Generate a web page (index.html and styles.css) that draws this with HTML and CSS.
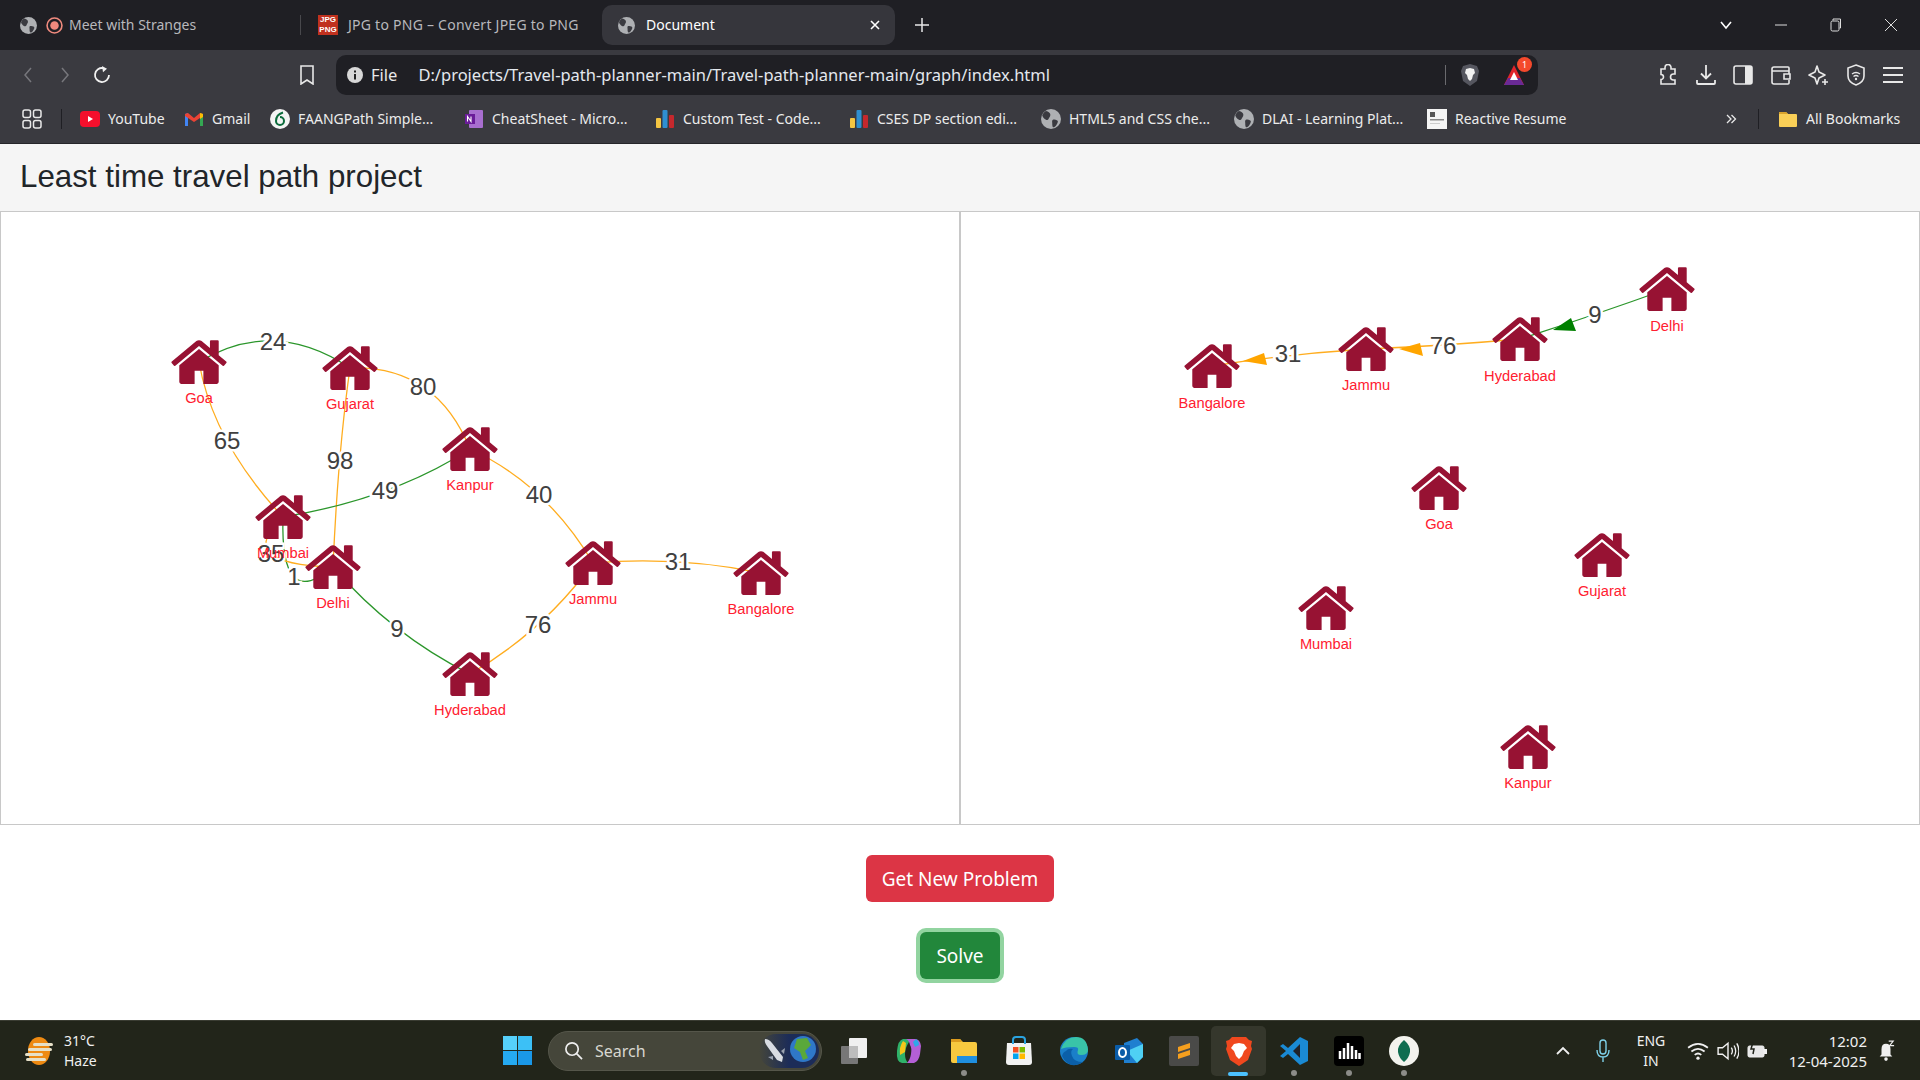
FILE: index.html
```html
<!DOCTYPE html>
<html lang="en">

<head>
  <meta charset="UTF-8">
  <title>Document</title>
  <link rel="stylesheet" href="styles.css">
</head>

<body>
  <svg class="defs" aria-hidden="true">
    <symbol id="house" viewBox="97 250 1598 1286">
      <path d="M1472 992v480q0 26-19 45t-45 19h-384v-384h-256v384h-384q-26 0-45-19t-19-45v-480q0-1 .5-3t.5-3l575-474 575 474q1 2 1 6zm223-69l-62 74q-8 9-21 11h-3q-13 0-21-7l-692-577-692 577q-12 8-24 7-13-2-21-11l-62-74q-8-10-7-23.5t11-20.5l719-599q32-26 76-26t76 26l244 204v-195q0-14 9-23t23-9h192q14 0 23 9t9 23v408l219 182q10 8 11 21.5t-7 23.5z" />
    </symbol>
    <symbol id="globe" viewBox="0 0 16 16">
      <circle cx="8" cy="8" r="8" fill="#aeb0b3" />
      <path d="M4 1.500c2 .5 3.500 1.500 3.500 3S6.500 6.500 6 8 3.500 8.500 2.500 7.500 1 5.500 1 5s1.500-3 3-3.500zM9.500 8.500c2-.5 4 .5 4 1.500s-1.500 4-3 4.500-1.500-2-1.500-3-.5-2.500.5-3z" fill="#3a3a40" />
    </symbol>
    <symbol id="bars" viewBox="0 0 20 20">
      <rect x="1" y="9" width="5" height="10" rx="1" fill="#f4c542" />
      <rect x="7.500" y="1" width="5" height="18" rx="1" fill="#2f8fd0" />
      <rect x="14" y="6" width="5" height="13" rx="1" fill="#c5282d" />
    </symbol>
    <linearGradient id="art-fade" x1="0" x2="1" y1="0" y2="0">
      <stop offset="0" stop-color="#1c2c58" stop-opacity="0" />
      <stop offset=".5" stop-color="#1c2c58" />
    </linearGradient>
  </svg>

  <header class="browser">
    <div class="tabs">
      <div class="tab tab-first">
        <svg class="ico16"><use href="#globe" /></svg>
        <svg class="ico16" viewBox="0 0 16 16"><circle cx="8" cy="8" r="7" fill="none" stroke="#f08a7e" stroke-width="1.500" /><circle cx="8" cy="8" r="4" fill="#f08a7e" /></svg>
        <span class="tab-title">Meet with Stranges</span>
      </div>
      <div class="tab-sep"></div>
      <div class="tab tab-second">
        <span class="jpg-icon">JPG<br>PNG</span>
        <span class="tab-title">JPG to PNG – Convert JPEG to PNG</span>
      </div>
      <div class="tab tab-active">
        <svg class="ico16"><use href="#globe" /></svg>
        <span class="tab-title">Document</span>
        <svg class="tab-close" viewBox="0 0 10 10"><path d="M1 1l8 8M9 1l-8 8" stroke="#fff" stroke-width="1.600" /></svg>
      </div>
      <svg class="new-tab" viewBox="0 0 14 14"><path d="M7 0v14M0 7h14" stroke="#e8e8e8" stroke-width="1.500" /></svg>
      <div class="win-btns">
        <svg class="win-ico" viewBox="0 0 14 14"><path d="M2 4l5 6 5-6" fill="none" stroke="#fff" stroke-width="1.600" /></svg>
        <svg class="win-ico" viewBox="0 0 14 14"><path d="M1 7h12" stroke="#ddd" stroke-width="1" /></svg>
        <svg class="win-ico" viewBox="0 0 14 14"><rect x="2" y="3" width="8" height="10" rx="1.500" fill="none" stroke="#ddd" /><path d="M4 2.500V1h7.500v9H10.500" fill="none" stroke="#ddd" /></svg>
        <svg class="win-ico" viewBox="0 0 14 14"><path d="M1 1l12 12M13 1L1 13" stroke="#ddd" stroke-width="1" /></svg>
      </div>
    </div>

    <div class="toolbar">
      <div class="nav-btns">
        <svg class="nav-ico" viewBox="0 0 20 20"><path d="M13 3l-6 7 6 7" fill="none" stroke="#77777c" stroke-width="1.500" /></svg>
        <svg class="nav-ico" viewBox="0 0 20 20"><path d="M7 3l6 7-6 7" fill="none" stroke="#77777c" stroke-width="1.500" /></svg>
        <svg class="nav-ico" viewBox="0 0 20 20"><path d="M11.500 3.200A7 7 0 1 0 17 10" fill="none" stroke="#f0f0f0" stroke-width="1.800" /><path d="M10 1l5 2.800-4 3.400z" fill="#f0f0f0" /></svg>
      </div>
      <svg class="bookmark-ico" viewBox="0 0 16 20"><path d="M2 1h12v18l-6-4-6 4z" fill="none" stroke="#e8e8e8" stroke-width="1.600" /></svg>
      <div class="address">
        <svg class="info-ico" viewBox="0 0 16 16"><circle cx="8" cy="8" r="8" fill="#d8d8d8" /><path d="M7 7h2v5.500H7zM7 3.500h2v2H7z" fill="#222" /></svg>
        <span class="addr-file">File</span>
        <span class="addr-url">D:/projects/Travel-path-planner-main/Travel-path-planner-main/graph/index.html</span>
        <div class="addr-sep"></div>
        <svg class="lion-ico" viewBox="0 0 20 24"><path d="M10 1l7 2 2 5-2 10-7 5-7-5L1 8l2-5z" fill="#55565f" /><path d="M10 5l4 1 1 4-2 2-1 4-2 2-2-2-1-4-2-2 1-4z" fill="#f2f2f2" /></svg>
        <div class="rewards">
          <svg viewBox="0 0 24 24" class="rewards-ico"><path d="M12 2l10 20H2z" fill="#e0242c" /><path d="M2 22l4-7h12l4 7z" fill="#6a2a96" /><path d="M12 9l4 8H8z" fill="#fff" /></svg>
          <span class="badge">1</span>
        </div>
      </div>
      <div class="tool-icons">
        <svg class="tool-ico" viewBox="0 0 22 22"><path d="M8 3.500a3 3 0 0 1 6 0V5h4v5h-1.500a3 3 0 0 0 0 6H18v4H4v-4.500a2.500 2.500 0 0 0 0-5V5h4z" fill="none" stroke="#e8e8e8" stroke-width="1.600" /></svg>
        <svg class="tool-ico" viewBox="0 0 22 22"><path d="M11 1v13M6 9.500l5 5 5-5M2 16v3q0 1 1 1h16q1 0 1-1v-3" fill="none" stroke="#e8e8e8" stroke-width="1.800" /></svg>
        <svg class="tool-ico" viewBox="0 0 22 22"><rect x="2" y="2" width="18" height="18" rx="2" fill="none" stroke="#e8e8e8" stroke-width="1.600" /><rect x="13" y="2" width="7" height="18" fill="#e8e8e8" /></svg>
        <svg class="tool-ico" viewBox="0 0 22 22"><path d="M19 7V4q0-1-1-1H4q-2 0-2 2v13q0 2 2 2h14q1 0 1-1v-3M2 6q0 1 2 1h15v3M20 10h-6v5h6z" fill="none" stroke="#e8e8e8" stroke-width="1.600" /></svg>
        <svg class="tool-ico" viewBox="0 0 22 22"><path d="M10 2l2 6 6 3-6 3-2 6-2-6-6-3 6-3z" fill="none" stroke="#e8e8e8" stroke-width="1.600" stroke-linejoin="round" /><path d="M18 15v6M15 18h6" stroke="#e8e8e8" stroke-width="1.600" /></svg>
        <svg class="tool-ico" viewBox="0 0 22 22"><path d="M11 1l8 3v8q0 6-8 9-8-3-8-9V4z" fill="none" stroke="#e8e8e8" stroke-width="1.600" /><path d="M7 10q4-3 8 0M8.500 12.500q2.500-2 5 0" fill="none" stroke="#e8e8e8" stroke-width="1.300" /><circle cx="11" cy="15" r="1.200" fill="#e8e8e8" /></svg>
        <svg class="tool-ico" viewBox="0 0 22 22"><path d="M1 4h20M1 11h20M1 18h20" stroke="#e8e8e8" stroke-width="1.800" /></svg>
      </div>
    </div>

    <div class="bookmarks">
      <svg class="apps-ico" viewBox="0 0 20 20"><g fill="none" stroke="#e8e8e8" stroke-width="1.500"><rect x="1" y="1" width="7.500" height="7.500" rx="2" /><rect x="11.500" y="1" width="7.500" height="7.500" rx="2" /><rect x="1" y="11.500" width="7.500" height="7.500" rx="2" /><rect x="11.500" y="11.500" width="7.500" height="7.500" rx="2" /></g></svg>
      <div class="bm-sep"></div>
      <a class="bm bm-yt"><svg class="ico20" viewBox="0 0 20 20"><rect y="2" width="20" height="16" rx="4" fill="#f40f2c" /><path d="M8 7l5 3-5 3z" fill="#fff" /></svg>YouTube</a>
      <a class="bm bm-gmail"><svg class="ico20" viewBox="0 0 20 20"><path d="M1 5l3-1v13H1z" fill="#4285f4" /><path d="M16 4l3 1v12h-3z" fill="#34a853" /><path d="M1 5l3-1 6 5 6-5 3 1v2l-9 6-9-6z" fill="#ea4335" /><path d="M16 4l3 1v3l-3 2z" fill="#fbbc04" /></svg>Gmail</a>
      <a class="bm bm-faang"><svg class="ico20" viewBox="0 0 20 20"><circle cx="10" cy="10" r="10" fill="#f4f4f4" /><path d="M13 3.500C8 5 6 8.500 6 12a4 4 0 1 0 4-4" fill="none" stroke="#0c6b3c" stroke-width="2" /></svg>FAANGPath Simple...</a>
      <a class="bm bm-one"><svg class="ico20" viewBox="0 0 20 20"><rect x="5" y="1" width="14" height="18" rx="1" fill="#a86ed0" /><rect x="1" y="5" width="10" height="10" fill="#6a1b9a" /><path d="M3.500 12.500v-5l3.500 5v-5" fill="none" stroke="#fff" stroke-width="1.100" /></svg>CheatSheet - Micro...</a>
      <a class="bm bm-custom"><svg class="ico20"><use href="#bars" /></svg>Custom Test - Code...</a>
      <a class="bm bm-cses"><svg class="ico20"><use href="#bars" /></svg>CSES DP section edi...</a>
      <a class="bm bm-html"><svg class="ico20"><use href="#globe" /></svg>HTML5 and CSS che...</a>
      <a class="bm bm-dlai"><svg class="ico20"><use href="#globe" /></svg>DLAI - Learning Plat...</a>
      <a class="bm bm-resume"><svg class="ico20" viewBox="0 0 20 20"><rect width="20" height="20" fill="#f4f4f4" /><rect x="3" y="3" width="5" height="5" fill="#555" /><rect x="3" y="10" width="14" height="1.500" fill="#888" /><rect x="3" y="14" width="10" height="1" fill="#ccc" /></svg>Reactive Resume</a>
      <svg class="bm-more" viewBox="0 0 12 12"><path d="M2 2l4 4-4 4M6.500 2l4 4-4 4" fill="none" stroke="#e8e8e8" stroke-width="1.300" /></svg>
      <div class="bm-sep bm-sep-right"></div>
      <a class="bm bm-all"><svg class="ico20" viewBox="0 0 20 20"><path d="M1 4q0-1 1-1h6l2 2h8q1 0 1 1v11q0 1-1 1H2q-1 0-1-1z" fill="#f9cf57" /><path d="M1 4q0-1 1-1h6l2 2H1z" fill="#d9a32c" /></svg>All Bookmarks</a>
    </div>
  </header>

  <h1 class="title-bar">Least time travel path project</h1>

  <main class="panels">
    <div class="panel">
      <svg class="graph" viewBox="1 212 958 612">
        <path class="edge green" d="M199 362Q274 317 350 368" />
        <path class="edge orange" d="M350 368Q436 365 470 449" />
        <path class="edge orange" d="M199 362Q213 442 283 517" />
        <path class="edge orange" d="M350 368Q338 452 333 567" />
        <path class="edge green" d="M283 517Q393 499 470 449" />
        <path class="edge orange" d="M470 449Q546 484 593 563" />
        <path class="edge orange" d="M593 563Q679 556 761 573" />
        <path class="edge orange" d="M593 563Q544 631 470 674" />
        <path class="edge green" d="M333 567Q392 635 470 674" />
        <path class="edge green" d="M283 517Q280 612 333 567" />
        <path class="edge orange" d="M283 517Q232 564 333 567" />

        <text class="edge-label" x="273" y="350">24</text>
        <text class="edge-label" x="423" y="395">80</text>
        <text class="edge-label" x="227" y="449">65</text>
        <text class="edge-label" x="340" y="469">98</text>
        <text class="edge-label" x="385" y="499">49</text>
        <text class="edge-label" x="539" y="503">40</text>
        <text class="edge-label" x="678" y="570">31</text>
        <text class="edge-label" x="538" y="633">76</text>
        <text class="edge-label" x="397" y="637">9</text>
        <text class="edge-label" x="294" y="585">1</text>
        <text class="edge-label" x="271" y="562">35</text>

        <g class="node" transform="translate(199 362)"><use href="#house" x="-28" y="-22" width="56" height="44" /><text y="41">Goa</text></g>
        <g class="node" transform="translate(350 368)"><use href="#house" x="-28" y="-22" width="56" height="44" /><text y="41">Gujarat</text></g>
        <g class="node" transform="translate(470 449)"><use href="#house" x="-28" y="-22" width="56" height="44" /><text y="41">Kanpur</text></g>
        <g class="node" transform="translate(283 517)"><use href="#house" x="-28" y="-22" width="56" height="44" /><text y="41">Mumbai</text></g>
        <g class="node" transform="translate(333 567)"><use href="#house" x="-28" y="-22" width="56" height="44" /><text y="41">Delhi</text></g>
        <g class="node" transform="translate(593 563)"><use href="#house" x="-28" y="-22" width="56" height="44" /><text y="41">Jammu</text></g>
        <g class="node" transform="translate(761 573)"><use href="#house" x="-28" y="-22" width="56" height="44" /><text y="41">Bangalore</text></g>
        <g class="node" transform="translate(470 674)"><use href="#house" x="-28" y="-22" width="56" height="44" /><text y="41">Hyderabad</text></g>
      </svg>
    </div>
    <div class="panel">
      <svg class="graph" viewBox="961 212 958 612">
        <path class="edge green" d="M1667 289Q1595 315 1520 339" />
        <path class="edge orange" d="M1520 339Q1443 346 1366 349" />
        <path class="edge orange" d="M1366 349Q1288 354 1212 366" />
        <path class="arrow-green" d="M1553 330L1571 318 1576 331z" />
        <path class="arrow-orange" d="M1399 349L1420 343 1423 356z" />
        <path class="arrow-orange" d="M1243 361L1264 353 1267 365z" />

        <text class="edge-label" x="1595" y="323">9</text>
        <text class="edge-label" x="1443" y="354">76</text>
        <text class="edge-label" x="1288" y="362">31</text>

        <g class="node" transform="translate(1667 289)"><use href="#house" x="-28" y="-22" width="56" height="44" /><text y="42">Delhi</text></g>
        <g class="node" transform="translate(1520 339)"><use href="#house" x="-28" y="-22" width="56" height="44" /><text y="42">Hyderabad</text></g>
        <g class="node" transform="translate(1366 349)"><use href="#house" x="-28" y="-22" width="56" height="44" /><text y="41">Jammu</text></g>
        <g class="node" transform="translate(1212 366)"><use href="#house" x="-28" y="-22" width="56" height="44" /><text y="42">Bangalore</text></g>
        <g class="node" transform="translate(1439 488)"><use href="#house" x="-28" y="-22" width="56" height="44" /><text y="41">Goa</text></g>
        <g class="node" transform="translate(1602 555)"><use href="#house" x="-28" y="-22" width="56" height="44" /><text y="41">Gujarat</text></g>
        <g class="node" transform="translate(1326 608)"><use href="#house" x="-28" y="-22" width="56" height="44" /><text y="41">Mumbai</text></g>
        <g class="node" transform="translate(1528 747)"><use href="#house" x="-28" y="-22" width="56" height="44" /><text y="41">Kanpur</text></g>
      </svg>
    </div>
  </main>

  <section class="actions">
    <button class="btn btn-red">Get New Problem</button>
    <button class="btn btn-green">Solve</button>
  </section>

  <footer class="taskbar">
    <div class="weather">
      <svg class="weather-ico" viewBox="0 0 30 30"><ellipse cx="15" cy="15" rx="11" ry="14" fill="#ee8a12" /><g fill="#e6e0c8"><rect x="9" y="7" width="20" height="3" rx="1.500" /><rect x="4" y="12" width="24" height="3" rx="1.500" /><rect x="1" y="17" width="18" height="3" rx="1.500" /><rect x="2" y="22" width="20" height="3" rx="1.500" /></g></svg>
      <div class="weather-text"><span>31°C</span><span>Haze</span></div>
    </div>
    <svg class="win-logo" viewBox="0 0 30 30"><g fill="#2bb5f0"><rect width="14.500" height="14.500" fill="#56d0fa" /><rect x="15.500" width="14.500" height="14.500" fill="#3cc0f6" /><rect y="15.500" width="14.500" height="14.500" fill="#25aaf2" /><rect x="15.500" y="15.500" width="14.500" height="14.500" fill="#1a98e8" /></g></svg>
    <div class="search">
      <svg class="search-ico" viewBox="0 0 20 20"><circle cx="8.500" cy="8.500" r="6.500" fill="none" stroke="#eee" stroke-width="1.800" /><path d="M13 13l6 6" stroke="#eee" stroke-width="1.800" /></svg>
      <span class="search-text">Search</span>
      <svg class="search-art" viewBox="0 0 60 34">
        <rect width="60" height="34" rx="17" fill="url(#art-fade)" />
        <path d="M6 5q4 0 7 4l11 14-1 5-5-2L8 12q-3-4-2-7z" fill="#d8dce2" />
        <path d="M14 22l-5 1 5 3zM22 17l4-3-1 6z" fill="#9aa2b0" />
        <circle cx="44" cy="15" r="13" fill="#2f78c8" />
        <path d="M38 5l10-1 4 7-6 6 3 7-5 2-3-8-6-4z" fill="#5aa83a" />
      </svg>
    </div>
    <div class="task-icons">
      <div class="task"><svg class="task-ico" viewBox="0 0 30 30"><rect x="10" y="2" width="18" height="20" rx="1" fill="#f0f0f0" /><rect x="2" y="10" width="17" height="18" rx="1" fill="#777" /><rect x="10" y="10" width="9" height="12" fill="#bdbdbd" /></svg></div>
      <div class="task"><svg class="task-ico" viewBox="0 0 30 30"><path d="M9 3q-5 1-6 12t5 12h6q-3-3-3-9t4-12q1-3 4-3z" fill="#2fb26a" /><path d="M12 3h9q5 0 6 7l-1 8q-1 7-6 9h-7q3-3 4-9t-1-9q-1-5-4-6z" fill="#b45fd6" /><path d="M9 5q-4 6-3 14l5-3 1-9z" fill="#f5c71a" /><path d="M22 3q3 2 3 6l-4 2-2-5z" fill="#2fa8e8" /></svg></div>
      <div class="task"><svg class="task-ico" viewBox="0 0 30 30"><path d="M2 5q0-2 2-2h7l3 3h12q2 0 2 2v17q0 2-2 2H4q-2 0-2-2z" fill="#f8c93f" /><path d="M2 3h9l2 3H2z" fill="#dd9c1e" /><rect x="8" y="20" width="20" height="7" fill="#1f8fe0" /></svg><i class="dot"></i></div>
      <div class="task"><svg class="task-ico" viewBox="0 0 30 30"><path d="M3 7h24l1 19q0 3-3 3H5q-3 0-3-3z" fill="#f2f2f2" /><path d="M9 8V4q0-3 3-3h6q3 0 3 3v4" fill="none" stroke="#2aa3e0" stroke-width="2" /><rect x="9" y="11" width="5.500" height="5.500" fill="#f25022" /><rect x="15.500" y="11" width="5.500" height="5.500" fill="#7fba00" /><rect x="9" y="17.500" width="5.500" height="5.500" fill="#00a4ef" /><rect x="15.500" y="17.500" width="5.500" height="5.500" fill="#ffb900" /></svg></div>
      <div class="task"><svg class="task-ico" viewBox="0 0 30 30"><circle cx="15" cy="15" r="14" fill="#1a7fc9" /><path d="M2 13Q6 1 17 1q11 0 12 13 0 5-7 5-5 0-3-5 1-3-4-3-9 0-13 2z" fill="#39c4a8" /><path d="M7 15q2-3 7-2-3 2-1 7 2 6 11 6-5 4-11 3T3 20q1-4 4-5z" fill="#0b5fa8" /></svg></div>
      <div class="task"><svg class="task-ico" viewBox="0 0 30 30"><path d="M10 7l13-5 6 6v13l-6 6H10z" fill="#1f7fd0" /><path d="M13 15l16-7v13l-6 6z" fill="#4fd0f4" /><rect x="1" y="9" width="15" height="15" rx="1" fill="#0a5ca8" /><ellipse cx="8.500" cy="16.500" rx="3.500" ry="4.500" fill="none" stroke="#fff" stroke-width="2" /></svg></div>
      <div class="task"><svg class="task-ico" viewBox="0 0 30 30"><rect width="30" height="30" rx="2" fill="#4a4a48" /><path d="M21 7L9 11v5l12-4zM21 14L9 18v5l12-4z" fill="#f59f1e" /></svg></div>
      <div class="task task-active"><svg class="task-ico" viewBox="0 0 30 30"><path d="M8 1h14l3 3 3 1-1 5 1 3-4 11-9 6-9-6L2 13l1-3-1-5 3-1z" fill="#f0481e" /><path d="M15 7l5 1 3 4-3 3-2 5-3 3-3-3-2-5-3-3 3-4z" fill="#fff" /></svg><i class="active-line"></i></div>
      <div class="task"><svg class="task-ico" viewBox="0 0 30 30"><path d="M21 1l8 4v20l-8 4L9 18l-5 4-3-2 6-5-6-5 3-2 5 4z" fill="#1a8ad4" /><path d="M21 8l-7 7 7 7z" fill="#20232a" /></svg><i class="dot"></i></div>
      <div class="task"><svg class="task-ico" viewBox="0 0 30 30"><rect width="30" height="30" rx="4" fill="#000" /><path d="M6 15v8M10 12v11M14 7v16M18 10v13M22 14v9M25.500 17v6" stroke="#fff" stroke-width="2.500" /></svg><i class="dot"></i></div>
      <div class="task"><svg class="task-ico" viewBox="0 0 30 30"><circle cx="15" cy="15" r="15" fill="#f3f3ee" /><path d="M15 4q7 6 6 12-1 6-6 10-5-4-6-10-1-6 6-12z" fill="#0f6d50" /></svg><i class="dot"></i></div>
    </div>
    <div class="tray">
      <svg class="tray-ico" viewBox="0 0 16 16"><path d="M2 11l6-6 6 6" fill="none" stroke="#f0f0f0" stroke-width="1.800" /></svg>
      <svg class="tray-ico tray-mic" viewBox="0 0 16 24"><rect x="5" y="1" width="6" height="14" rx="3" fill="none" stroke="#7ed0e8" stroke-width="1.400" /><path d="M2 11q0 7 6 7t6-7M8 18v5" fill="none" stroke="#7ed0e8" stroke-width="1.400" /></svg>
      <div class="lang"><span>ENG</span><span>IN</span></div>
      <svg class="tray-ico tray-wifi" viewBox="0 0 20 20"><path d="M1 7q9-7 18 0M4 10.500q6-5 12 0M7 13.500q3-2.500 6 0" fill="none" stroke="#f0f0f0" stroke-width="1.600" /><circle cx="10" cy="16.500" r="1.500" fill="#f0f0f0" /></svg>
      <svg class="tray-ico tray-vol" viewBox="0 0 20 20"><path d="M1 7h4l5-4v14l-5-4H1z" fill="none" stroke="#f0f0f0" stroke-width="1.300" /><path d="M13 7q2 3 0 6M15.500 5q3 5 0 10M18 3q4 7 0 14" fill="none" stroke="#f0f0f0" stroke-width="1.200" /></svg>
      <svg class="tray-ico tray-bat" viewBox="0 0 22 20"><rect x="2" y="5" width="16" height="11" rx="1.500" fill="#e8e8e8" stroke="#f0f0f0" /><rect x="18" y="8" width="3" height="5" fill="#f0f0f0" /><path d="M7 1l-2 7h3l-1 5" fill="none" stroke="#20231a" stroke-width="1.500" /></svg>
      <div class="clock"><span>12:02</span><span>12-04-2025</span></div>
      <svg class="tray-ico tray-bell" viewBox="0 0 20 24"><path d="M10 4q5 0 5 6v6l2 2H3l2-2v-6q0-6 5-6z" fill="#f0f0f0" /><circle cx="10" cy="21" r="2" fill="#f0f0f0" /><path d="M13 1h5l-4 5h5" fill="none" stroke="#f0f0f0" stroke-width="1.300" /></svg>
    </div>
  </footer>
</body>

</html>
```

FILE: styles.css
```css
* {
  box-sizing: border-box;
}

body {
  margin: 0;
  width: 1920px;
  height: 1080px;
  overflow: hidden;
  display: flex;
  flex-direction: column;
  background: #fff;
  font-family: "Noto Sans", sans-serif;
}

.defs {
  position: absolute;
  width: 0;
  height: 0;
}

/* browser frame */
.browser {
  height: 144px;
  flex: none;
  color: #e8e8e8;
  font-size: 14px;
  border-bottom: 1px solid #26262a;
}

.tabs {
  height: 50px;
  display: flex;
  align-items: center;
  background: #1f1f24;
}

.tab {
  display: flex;
  align-items: center;
}

.tab-title {
  padding-bottom: 2px;
}

.tab-first {
  width: 300px;
  padding-left: 20px;
  gap: 9px;
  color: #b8b8bc;
}

.tab-first .tab-title {
  margin-left: -3px;
}

.tab-sep {
  width: 1px;
  height: 20px;
  background: #48484c;
}

.tab-second {
  width: 301px;
  padding-left: 17px;
  gap: 10px;
  color: #b8b8bc;
  letter-spacing: .25px;
}

.jpg-icon {
  width: 20px;
  height: 20px;
  background: #c0311e;
  color: #fff;
  font: bold 8px/10px "Liberation Sans", sans-serif;
  letter-spacing: 0;
  text-align: center;
}

.tab-active {
  width: 293px;
  height: 40px;
  padding: 0 15px 0 16px;
  gap: 11px;
  border-radius: 10px;
  background: #36363c;
  color: #fff;
}

.tab-close {
  width: 10px;
  height: 10px;
  margin-left: auto;
}

.ico16 {
  width: 17px;
  height: 17px;
  flex: none;
}

.new-tab {
  width: 14px;
  height: 14px;
  margin-left: 20px;
}

.win-btns {
  display: flex;
  margin-left: auto;
  padding-right: 22px;
  gap: 41px;
}

.win-ico {
  width: 14px;
  height: 14px;
}

.toolbar {
  height: 50px;
  display: flex;
  align-items: center;
  background: #3a3a40;
}

.nav-btns {
  display: flex;
  gap: 17px;
  padding-left: 18px;
}

.nav-ico {
  width: 20px;
  height: 20px;
}

.bookmark-ico {
  width: 16px;
  height: 20px;
  margin-left: 187px;
}

.address {
  width: 1202px;
  height: 40px;
  margin-left: 21px;
  padding: 0 4px 0 11px;
  display: flex;
  align-items: center;
  border-radius: 10px;
  background: #1f1f24;
  font-size: 16.500px;
}

.info-ico {
  width: 16px;
  height: 16px;
}

.addr-file {
  margin-left: 8px;
  padding-bottom: 2px;
  color: #e8e8e8;
}

.addr-url {
  margin-left: 21px;
  padding-bottom: 2px;
  color: #e4e8ee;
}

.addr-sep {
  width: 1px;
  height: 20px;
  margin-left: auto;
  background: #6a6a6e;
}

.lion-ico {
  width: 20px;
  height: 24px;
  margin-left: 14px;
}

.rewards {
  position: relative;
  width: 24px;
  height: 24px;
  margin-left: 22px;
  margin-right: 8px;
}

.rewards-ico {
  width: 24px;
  height: 24px;
}

.badge {
  position: absolute;
  top: -6px;
  right: -6px;
  width: 15px;
  height: 15px;
  border-radius: 50%;
  background: #f4492c;
  color: #fff;
  font-size: 9px;
  line-height: 15px;
  text-align: center;
}

.tool-icons {
  display: flex;
  margin-left: 119px;
  gap: 15.500px;
}

.tool-ico {
  width: 22px;
  height: 22px;
}

.bookmarks {
  height: 43px;
  display: flex;
  align-items: center;
  padding: 0 0 7px 22px;
  background: #3a3a40;
}

.apps-ico {
  width: 20px;
  height: 20px;
  margin-top: 2px;
}

.bm-sep {
  width: 1px;
  height: 20px;
  margin-left: 19px;
  margin-top: 2px;
  background: #1f1f24;
}

.bm {
  display: flex;
  align-items: center;
  gap: 8px;
  color: #ececec;
  white-space: nowrap;
}

.ico20 {
  width: 20px;
  height: 20px;
  flex: none;
  margin-top: 2px;
}

.bm-yt {
  margin-left: 18px;
  width: 104px;
}

.bm-gmail {
  width: 86px;
}

.bm-faang {
  width: 194px;
}

.bm-one {
  width: 191px;
}

.bm-custom {
  width: 194px;
}

.bm-cses {
  width: 192px;
}

.bm-html {
  width: 193px;
}

.bm-dlai {
  width: 193px;
}

.bm-resume {
  width: 298px;
}

.bm-more {
  width: 12px;
  height: 12px;
  margin-top: 2px;
}

.bm-sep-right {
  margin-left: 21px;
}

.bm-all {
  margin-left: 19px;
}

/* page */
.title-bar {
  height: 67px;
  flex: none;
  margin: 0;
  padding: 0 20px;
  background: #f5f5f5;
  color: #212529;
  font: 400 31.300px/66px "Liberation Sans", sans-serif;
}

.panels {
  height: 614px;
  flex: none;
  display: grid;
  grid-template-columns: 1fr 1fr;
}

.panel {
  border: 1px solid #c8c8c8;
  background: #fff;
}

.graph {
  display: block;
  width: 100%;
  height: 100%;
}

.edge {
  fill: none;
  stroke-width: 1.300;
}

.edge.green {
  stroke: #2b962b;
}

.edge.orange {
  stroke: #ffad1f;
}

.arrow-green {
  fill: #008000;
}

.arrow-orange {
  fill: #ffa500;
}

.edge-label {
  font: 24px "Liberation Sans", sans-serif;
  fill: #404040;
  stroke: #fff;
  stroke-width: 5px;
  paint-order: stroke;
  text-anchor: middle;
}

.node use {
  fill: #971233;
}

.node text {
  font: 14.700px "Liberation Sans", sans-serif;
  fill: #ff2030;
  text-anchor: middle;
}

.actions {
  flex: 1;
  display: flex;
  flex-direction: column;
  align-items: center;
  padding-top: 30px;
  gap: 30px;
}

.btn {
  height: 47px;
  padding: 0;
  border: 0;
  border-radius: 6px;
  color: #fff;
  font-family: "Noto Sans", sans-serif;
  font-size: 19px;
  white-space: nowrap;
}

.btn-red {
  width: 188px;
  background: #dc3545;
}

.btn-green {
  width: 80px;
  background: #22873b;
  box-shadow: 0 0 0 4px #92d4a0;
}

/* windows taskbar */
.taskbar {
  height: 60px;
  flex: none;
  position: relative;
  display: flex;
  align-items: center;
  background: #22251a;
  border-top: 1px solid #3a3c32;
  color: #f0f0f0;
  font-size: 14px;
}

.weather {
  width: 503px;
  display: flex;
  align-items: center;
  padding-left: 24px;
  gap: 10px;
}

.weather-ico {
  width: 30px;
  height: 30px;
}

.weather-text,
.lang,
.clock {
  display: flex;
  flex-direction: column;
  gap: 2px;
  line-height: 18px;
}

.win-logo {
  width: 29px;
  height: 29px;
}

.search {
  width: 274px;
  height: 40px;
  margin-left: 16px;
  display: flex;
  align-items: center;
  padding: 0 2px 0 15px;
  border-radius: 20px;
  background: #45463a;
  border: 1px solid #55564a;
}

.search-ico {
  width: 19px;
  height: 19px;
}

.search-text {
  margin-left: 12px;
  font-size: 16px;
  color: #d8d8d0;
}

.search-art {
  width: 60px;
  height: 34px;
  margin-left: auto;
}

.task-icons {
  display: flex;
  margin-left: 4px;
}

.task {
  position: relative;
  width: 55px;
  height: 50px;
  display: flex;
  align-items: center;
  justify-content: center;
  border-radius: 5px;
}

.task-active {
  background: #35372c;
}

.task-ico {
  width: 30px;
  height: 30px;
}

.dot {
  position: absolute;
  bottom: 0;
  left: 50%;
  width: 6px;
  height: 6px;
  margin-left: -3px;
  border-radius: 50%;
  background: #8c8c88;
}

.active-line {
  position: absolute;
  bottom: 0;
  left: 17px;
  width: 20px;
  height: 4px;
  border-radius: 2px;
  background: #4cc2ff;
}

.tray {
  display: flex;
  align-items: center;
  margin-left: 124px;
}

.tray-ico {
  width: 16px;
  height: 16px;
}

.tray-mic {
  width: 16px;
  height: 24px;
  margin-left: 24px;
}

.lang {
  width: 30px;
  margin-left: 25px;
  text-align: center;
  align-items: center;
}

.tray-wifi {
  width: 22px;
  height: 22px;
  margin-left: 21px;
}

.tray-vol {
  width: 22px;
  height: 22px;
  margin-left: 8px;
}

.tray-bat {
  width: 22px;
  height: 22px;
  margin-left: 7px;
}

.clock {
  width: 90px;
  margin-left: 9px;
  align-items: flex-end;
  font-size: 15px;
}

.tray-bell {
  width: 18px;
  height: 22px;
  margin-left: 10px;
}
```
